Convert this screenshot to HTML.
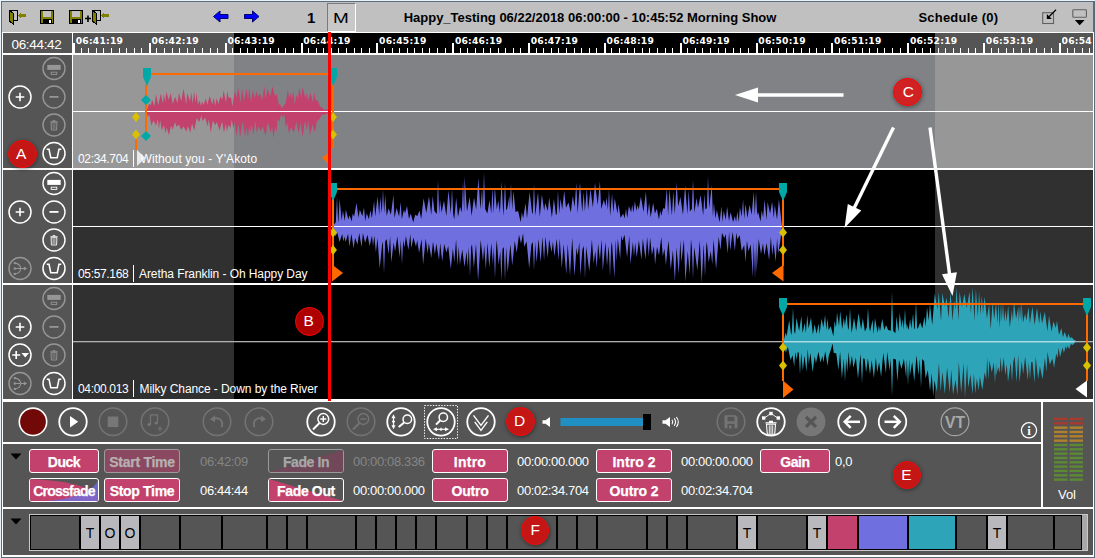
<!DOCTYPE html>
<html><head><meta charset="utf-8"><title>Segue Editor</title>
<style>
html,body{margin:0;padding:0}
body{width:1095px;height:558px;overflow:hidden;background:#e9f1f9;font-family:"Liberation Sans",sans-serif;color:#fff}
#win{position:absolute;left:0;top:0;width:1095px;height:558px;overflow:hidden}
#win div,#win svg,#win span{position:absolute}
.t{white-space:nowrap;line-height:1}
.btn{box-sizing:border-box;border:1px solid #fff;border-radius:3px;background:#c2416d;color:#fff;font-weight:bold;font-size:14px;text-align:center;overflow:hidden}
.btn span{left:0;right:0;top:4px;text-align:center;line-height:16px;letter-spacing:-0.4px;-webkit-text-stroke:0.25px currentColor}
.tv{font-size:13px;line-height:16px;letter-spacing:-0.35px;white-space:nowrap}
.rl{font-family:"DejaVu Sans","Liberation Sans",sans-serif;font-size:9.2px;font-weight:bold;line-height:12px;white-space:nowrap;color:#fff;letter-spacing:0.22px}
.lbl{font-size:12px;line-height:16px;white-space:nowrap;letter-spacing:-0.06px}
.dur{letter-spacing:-0.34px}
.ann{box-sizing:border-box;border-radius:50%;background:rgba(236,0,0,.74);border:1.8px solid #f40606;box-shadow:0.5px 1px 4px rgba(0,0,0,.45);color:#fff;font-size:15.5px;text-align:center}
.ann span{width:25.6px;top:5px;line-height:16px;text-align:center}
</style></head><body><div id="win">
<div style="left:1px;top:1px;width:1094px;height:557px;background:#5c6b7c;"></div>
<div style="left:2px;top:2px;width:1092px;height:555px;background:#ffffff;"></div>
<div style="left:2px;top:2px;width:1091px;height:30px;background:#c0c0c0;"></div>
<div style="left:1093px;top:2px;width:1px;height:30px;background:#5c6b7c;"></div>
<svg style="left:0;top:0" width="1095" height="33" viewBox="0 0 1095 33">
<g id="door" shape-rendering="crispEdges">
<rect x="9.5" y="10.5" width="8" height="10" fill="#c0c0c0" stroke="#000" stroke-width="1"/>
<polygon points="9,10 13.5,13.5 13.5,24.5 9,20.5" fill="#808000" stroke="#000" stroke-width="1"/>
<polygon points="17.5,15.5 21,12 21,14 26,14 26,17 21,17 21,19" fill="#808000"/>
</g>
<g shape-rendering="crispEdges">
<rect x="40.5" y="10.5" width="13" height="13" fill="#808000" stroke="#000"/>
<rect x="43" y="11" width="8" height="6" fill="#c0c0c0"/>
<rect x="43" y="19" width="9" height="4" fill="#000"/>
<rect x="49" y="20" width="2" height="3" fill="#fff"/>
</g>
<g shape-rendering="crispEdges" transform="translate(29 0)">
<rect x="40.5" y="10.5" width="13" height="13" fill="#808000" stroke="#000"/>
<rect x="43" y="11" width="8" height="6" fill="#c0c0c0"/>
<rect x="43" y="19" width="9" height="4" fill="#000"/>
<rect x="49" y="20" width="2" height="3" fill="#fff"/>
</g>
<path d="M85 18.5h6M88 15.5v6.5" stroke="#000" stroke-width="1.6" fill="none"/>
<g transform="translate(83 0)" shape-rendering="crispEdges">
<rect x="9.5" y="10.5" width="8" height="10" fill="#c0c0c0" stroke="#000" stroke-width="1"/>
<polygon points="9,10 13.5,13.5 13.5,24.5 9,20.5" fill="#808000" stroke="#000" stroke-width="1"/>
<polygon points="17.5,15.5 21,12 21,14 26,14 26,17 21,17 21,19" fill="#808000"/>
</g>
<polygon points="213.5,16.5 220,11 220,14.5 228,14.5 228,18.5 220,18.5 220,22" fill="#0000ff" stroke="#000070" stroke-width="1"/>
<polygon points="259,16.5 252.5,11 252.5,14.5 244.5,14.5 244.5,18.5 252.5,18.5 252.5,22" fill="#0000ff" stroke="#000070" stroke-width="1"/>
<g fill="none">
<rect x="1042.700" y="12.700" width="10.800" height="10.800" stroke="#606060" stroke-width="1.100"/>
<path d="M1056 9.800L1049 16.800" stroke="#000" stroke-width="1.300"/>
<polygon points="1046.800,19 1046.800,14 1051.800,19" fill="#000"/>
<rect x="1072.800" y="9.700" width="13.600" height="7.600" rx="0.800" stroke="#606060" stroke-width="1.100"/>
<polygon points="1074.800,20 1084.600,20 1079.700,25.200" fill="#000"/>
</g>
</svg>
<div class="t" style="left:307px;top:10px;font-size:15px;font-weight:bold;color:#000">1</div>
<div style="left:327px;top:3px;width:29px;height:29px;background:#c8c8c8;box-sizing:border-box;border:1px solid;border-color:#7a7a7a #fff #fff #7a7a7a"></div>
<div class="t" style="left:333.200px;top:9.500px;font-size:15.500px;color:#000;transform-origin:0 0;transform:scaleX(1.22)">M</div>
<div class="t" id="title" style="left:403.700px;top:10.500px;font-size:13px;font-weight:bold;color:#000;letter-spacing:-0.01px">Happy_Testing 06/22/2018 06:00:00 - 10:45:52 Morning Show</div>
<div class="t" id="sched" style="left:918.500px;top:10.500px;font-size:13px;font-weight:bold;color:#000;letter-spacing:0.2px">Schedule (0)</div>
<div style="left:3px;top:33px;width:69px;height:20px;background:#555555;"></div>
<div class="t" style="left:11.500px;top:38px;font-size:13.500px;color:#fff;letter-spacing:-0.33px">06:44:42</div>
<div style="left:73px;top:33px;width:1020px;height:20px;background:#555555;"></div>
<div style="left:234px;top:33px;width:701px;height:20px;background:#000;"></div>
<svg style="left:0;top:33px" width="1095" height="22" viewBox="0 33 1095 22" shape-rendering="crispEdges"><rect x="73" y="43" width="2" height="10" fill="#fff"/><rect x="81" y="48" width="1" height="5" fill="#fff"/><rect x="88" y="48" width="1" height="5" fill="#fff"/><rect x="96" y="48" width="1" height="5" fill="#fff"/><rect x="103" y="48" width="1" height="5" fill="#fff"/><rect x="111" y="48" width="1" height="5" fill="#fff"/><rect x="119" y="48" width="1" height="5" fill="#fff"/><rect x="126" y="48" width="1" height="5" fill="#fff"/><rect x="134" y="48" width="1" height="5" fill="#fff"/><rect x="141" y="48" width="1" height="5" fill="#fff"/><rect x="149" y="43" width="2" height="10" fill="#fff"/><rect x="156" y="48" width="1" height="5" fill="#fff"/><rect x="164" y="48" width="1" height="5" fill="#fff"/><rect x="172" y="48" width="1" height="5" fill="#fff"/><rect x="179" y="48" width="1" height="5" fill="#fff"/><rect x="187" y="48" width="1" height="5" fill="#fff"/><rect x="194" y="48" width="1" height="5" fill="#fff"/><rect x="202" y="48" width="1" height="5" fill="#fff"/><rect x="210" y="48" width="1" height="5" fill="#fff"/><rect x="217" y="48" width="1" height="5" fill="#fff"/><rect x="225" y="43" width="2" height="10" fill="#fff"/><rect x="232" y="48" width="1" height="5" fill="#fff"/><rect x="240" y="48" width="1" height="5" fill="#fff"/><rect x="247" y="48" width="1" height="5" fill="#fff"/><rect x="255" y="48" width="1" height="5" fill="#fff"/><rect x="263" y="48" width="1" height="5" fill="#fff"/><rect x="270" y="48" width="1" height="5" fill="#fff"/><rect x="278" y="48" width="1" height="5" fill="#fff"/><rect x="285" y="48" width="1" height="5" fill="#fff"/><rect x="293" y="48" width="1" height="5" fill="#fff"/><rect x="301" y="43" width="2" height="10" fill="#fff"/><rect x="308" y="48" width="1" height="5" fill="#fff"/><rect x="316" y="48" width="1" height="5" fill="#fff"/><rect x="323" y="48" width="1" height="5" fill="#fff"/><rect x="331" y="48" width="1" height="5" fill="#fff"/><rect x="338" y="48" width="1" height="5" fill="#fff"/><rect x="346" y="48" width="1" height="5" fill="#fff"/><rect x="354" y="48" width="1" height="5" fill="#fff"/><rect x="361" y="48" width="1" height="5" fill="#fff"/><rect x="369" y="48" width="1" height="5" fill="#fff"/><rect x="376" y="43" width="2" height="10" fill="#fff"/><rect x="384" y="48" width="1" height="5" fill="#fff"/><rect x="392" y="48" width="1" height="5" fill="#fff"/><rect x="399" y="48" width="1" height="5" fill="#fff"/><rect x="407" y="48" width="1" height="5" fill="#fff"/><rect x="414" y="48" width="1" height="5" fill="#fff"/><rect x="422" y="48" width="1" height="5" fill="#fff"/><rect x="429" y="48" width="1" height="5" fill="#fff"/><rect x="437" y="48" width="1" height="5" fill="#fff"/><rect x="445" y="48" width="1" height="5" fill="#fff"/><rect x="452" y="43" width="2" height="10" fill="#fff"/><rect x="460" y="48" width="1" height="5" fill="#fff"/><rect x="467" y="48" width="1" height="5" fill="#fff"/><rect x="475" y="48" width="1" height="5" fill="#fff"/><rect x="483" y="48" width="1" height="5" fill="#fff"/><rect x="490" y="48" width="1" height="5" fill="#fff"/><rect x="498" y="48" width="1" height="5" fill="#fff"/><rect x="505" y="48" width="1" height="5" fill="#fff"/><rect x="513" y="48" width="1" height="5" fill="#fff"/><rect x="520" y="48" width="1" height="5" fill="#fff"/><rect x="528" y="43" width="2" height="10" fill="#fff"/><rect x="536" y="48" width="1" height="5" fill="#fff"/><rect x="543" y="48" width="1" height="5" fill="#fff"/><rect x="551" y="48" width="1" height="5" fill="#fff"/><rect x="558" y="48" width="1" height="5" fill="#fff"/><rect x="566" y="48" width="1" height="5" fill="#fff"/><rect x="574" y="48" width="1" height="5" fill="#fff"/><rect x="581" y="48" width="1" height="5" fill="#fff"/><rect x="589" y="48" width="1" height="5" fill="#fff"/><rect x="596" y="48" width="1" height="5" fill="#fff"/><rect x="604" y="43" width="2" height="10" fill="#fff"/><rect x="611" y="48" width="1" height="5" fill="#fff"/><rect x="619" y="48" width="1" height="5" fill="#fff"/><rect x="627" y="48" width="1" height="5" fill="#fff"/><rect x="634" y="48" width="1" height="5" fill="#fff"/><rect x="642" y="48" width="1" height="5" fill="#fff"/><rect x="649" y="48" width="1" height="5" fill="#fff"/><rect x="657" y="48" width="1" height="5" fill="#fff"/><rect x="665" y="48" width="1" height="5" fill="#fff"/><rect x="672" y="48" width="1" height="5" fill="#fff"/><rect x="680" y="43" width="2" height="10" fill="#fff"/><rect x="687" y="48" width="1" height="5" fill="#fff"/><rect x="695" y="48" width="1" height="5" fill="#fff"/><rect x="702" y="48" width="1" height="5" fill="#fff"/><rect x="710" y="48" width="1" height="5" fill="#fff"/><rect x="718" y="48" width="1" height="5" fill="#fff"/><rect x="725" y="48" width="1" height="5" fill="#fff"/><rect x="733" y="48" width="1" height="5" fill="#fff"/><rect x="740" y="48" width="1" height="5" fill="#fff"/><rect x="748" y="48" width="1" height="5" fill="#fff"/><rect x="756" y="43" width="2" height="10" fill="#fff"/><rect x="763" y="48" width="1" height="5" fill="#fff"/><rect x="771" y="48" width="1" height="5" fill="#fff"/><rect x="778" y="48" width="1" height="5" fill="#fff"/><rect x="786" y="48" width="1" height="5" fill="#fff"/><rect x="793" y="48" width="1" height="5" fill="#fff"/><rect x="801" y="48" width="1" height="5" fill="#fff"/><rect x="809" y="48" width="1" height="5" fill="#fff"/><rect x="816" y="48" width="1" height="5" fill="#fff"/><rect x="824" y="48" width="1" height="5" fill="#fff"/><rect x="831" y="43" width="2" height="10" fill="#fff"/><rect x="839" y="48" width="1" height="5" fill="#fff"/><rect x="847" y="48" width="1" height="5" fill="#fff"/><rect x="854" y="48" width="1" height="5" fill="#fff"/><rect x="862" y="48" width="1" height="5" fill="#fff"/><rect x="869" y="48" width="1" height="5" fill="#fff"/><rect x="877" y="48" width="1" height="5" fill="#fff"/><rect x="884" y="48" width="1" height="5" fill="#fff"/><rect x="892" y="48" width="1" height="5" fill="#fff"/><rect x="900" y="48" width="1" height="5" fill="#fff"/><rect x="907" y="43" width="2" height="10" fill="#fff"/><rect x="915" y="48" width="1" height="5" fill="#fff"/><rect x="922" y="48" width="1" height="5" fill="#fff"/><rect x="930" y="48" width="1" height="5" fill="#fff"/><rect x="938" y="48" width="1" height="5" fill="#fff"/><rect x="945" y="48" width="1" height="5" fill="#fff"/><rect x="953" y="48" width="1" height="5" fill="#fff"/><rect x="960" y="48" width="1" height="5" fill="#fff"/><rect x="968" y="48" width="1" height="5" fill="#fff"/><rect x="975" y="48" width="1" height="5" fill="#fff"/><rect x="983" y="43" width="2" height="10" fill="#fff"/><rect x="991" y="48" width="1" height="5" fill="#fff"/><rect x="998" y="48" width="1" height="5" fill="#fff"/><rect x="1006" y="48" width="1" height="5" fill="#fff"/><rect x="1013" y="48" width="1" height="5" fill="#fff"/><rect x="1021" y="48" width="1" height="5" fill="#fff"/><rect x="1029" y="48" width="1" height="5" fill="#fff"/><rect x="1036" y="48" width="1" height="5" fill="#fff"/><rect x="1044" y="48" width="1" height="5" fill="#fff"/><rect x="1051" y="48" width="1" height="5" fill="#fff"/><rect x="1059" y="43" width="2" height="10" fill="#fff"/><rect x="1067" y="48" width="1" height="5" fill="#fff"/><rect x="1074" y="48" width="1" height="5" fill="#fff"/><rect x="1082" y="48" width="1" height="5" fill="#fff"/><rect x="1089" y="48" width="1" height="5" fill="#fff"/></svg>
<div class="rl" style="left:75.7px;top:34.7px">06:41:19</div>
<div class="rl" style="left:151.5px;top:34.7px">06:42:19</div>
<div class="rl" style="left:227.4px;top:34.7px">06:43:19</div>
<div class="rl" style="left:303.2px;top:34.7px">06:44:19</div>
<div class="rl" style="left:379.1px;top:34.7px">06:45:19</div>
<div class="rl" style="left:454.9px;top:34.7px">06:46:19</div>
<div class="rl" style="left:530.7px;top:34.7px">06:47:19</div>
<div class="rl" style="left:606.6px;top:34.7px">06:48:19</div>
<div class="rl" style="left:682.4px;top:34.7px">06:49:19</div>
<div class="rl" style="left:758.3px;top:34.7px">06:50:19</div>
<div class="rl" style="left:834.1px;top:34.7px">06:51:19</div>
<div class="rl" style="left:909.9px;top:34.7px">06:52:19</div>
<div class="rl" style="left:985.8px;top:34.7px">06:53:19</div>
<div style="left:1061.6px;top:35px;width:30.4px;height:13px;overflow:hidden"><div class="rl" style="left:0;top:-0.3px">06:54:19</div></div>
<div style="left:3px;top:55px;width:69px;height:113px;background:#555555;"></div>
<div style="left:3px;top:170px;width:69px;height:113px;background:#555555;"></div>
<div style="left:3px;top:285px;width:69px;height:114px;background:#555555;"></div>
<div style="left:73px;top:55px;width:1020px;height:113px;background:#979797;"></div>
<div style="left:234px;top:55px;width:701px;height:113px;background:#808285;"></div>
<div style="left:73px;top:170px;width:1020px;height:113px;background:#303030;"></div>
<div style="left:234px;top:170px;width:701px;height:113px;background:#000;"></div>
<div style="left:73px;top:285px;width:1020px;height:114px;background:#303030;"></div>
<div style="left:234px;top:285px;width:701px;height:114px;background:#000;"></div>
<svg style="left:0;top:54px" width="1095" height="348" viewBox="0 54 1095 348"><path d="M147.0 111.5L147.0 110.1L149.0 104.1L150.8 105.1L152.1 99.7L154.5 106.1L156.0 94.0L158.2 105.3L160.8 93.5L162.9 103.4L163.9 94.0L165.2 102.2L166.3 91.7L168.7 99.7L170.8 93.2L172.6 103.7L175.3 96.8L177.5 103.5L178.9 92.8L181.2 101.6L183.6 88.7L186.1 104.6L187.4 93.3L190.1 101.6L191.2 92.0L192.7 103.7L194.2 91.3L195.4 102.7L196.6 92.9L197.9 104.5L199.7 100.5L200.9 106.0L202.1 101.5L203.5 104.9L205.9 98.4L207.3 104.8L209.7 96.0L212.4 104.4L213.8 97.5L215.3 106.0L216.5 98.2L218.5 103.9L220.3 96.6L222.3 99.8L223.6 90.6L226.0 102.7L227.3 91.0L228.6 97.5L231.1 97.8L232.3 106.5L234.9 90.8L236.4 97.5L238.4 88.6L240.6 102.8L242.0 88.8L244.0 100.8L246.6 88.5L248.1 99.6L249.2 87.8L251.1 102.7L252.8 89.9L254.9 98.6L256.9 90.6L257.9 96.9L260.1 93.5L262.2 100.2L264.4 86.0L265.5 98.9L267.8 88.8L270.0 96.4L272.5 86.4L275.1 96.4L276.8 94.0L278.8 104.4L280.4 104.5L281.5 108.4L284.2 104.9L285.9 102.5L287.9 88.9L289.0 98.7L290.1 92.5L291.5 98.7L293.3 91.3L294.7 104.5L296.3 94.9L297.5 98.5L299.7 88.1L301.2 98.4L302.6 86.8L305.1 97.4L306.8 93.6L308.0 100.9L310.4 92.5L313.0 102.2L314.3 92.5L315.7 100.3L317.8 100.6L320.2 106.7L321.9 107.2L324.4 110.2L326.6 109.0L329.0 110.7L330.0 111.2L330.0 111.5L330.0 111.8L329.1 113.6L326.9 113.5L324.4 114.8L322.1 114.6L319.5 118.8L316.8 121.4L314.8 132.2L312.4 124.4L310.0 135.1L308.1 120.1L306.8 130.5L305.0 120.6L302.6 137.0L300.6 122.9L298.7 133.6L296.4 121.8L293.8 132.6L291.2 127.3L288.8 133.2L287.5 123.3L285.6 126.9L284.5 114.5L283.1 117.2L280.8 114.8L279.7 121.8L277.5 118.6L276.5 133.1L275.2 126.3L273.5 138.1L272.1 126.5L270.7 132.7L268.0 122.3L265.4 136.0L262.9 126.3L260.6 131.1L258.6 126.3L256.7 132.4L255.3 120.6L253.4 135.3L251.7 124.2L250.4 132.3L249.1 126.4L248.0 137.6L246.4 126.4L245.0 136.7L242.7 121.3L240.1 137.6L238.6 124.1L236.1 135.9L234.9 121.7L233.4 128.0L231.7 119.5L230.6 127.7L228.6 125.1L226.9 131.4L225.9 123.5L224.0 132.5L222.1 121.4L219.4 130.4L216.9 122.0L215.2 125.3L212.8 120.8L210.7 132.5L208.8 118.9L207.7 126.5L205.1 117.5L202.6 121.1L201.4 115.4L199.0 122.2L196.7 117.8L194.3 130.2L192.0 123.4L190.3 132.4L187.8 125.9L186.3 131.7L183.6 126.4L181.1 129.8L179.0 124.4L176.7 126.7L175.0 122.3L172.6 129.4L171.0 125.4L168.9 135.3L166.7 127.5L165.5 133.4L163.9 125.1L161.8 130.4L160.2 120.3L158.9 129.3L157.9 118.9L156.1 125.8L153.5 120.6L151.4 125.4L149.3 114.8L148.0 116.7L147.0 112.9Z" fill="#c2416d"/><path d="M334.0 226.5L334.0 224.4L335.8 222.3L337.0 196.5L338.2 222.3L338.5 221.2L339.6 198.7L341.7 220.6L342.9 210.5L344.8 221.1L345.8 209.6L348.4 219.4L349.6 215.2L351.7 221.4L352.7 213.6L354.1 216.5L356.5 203.0L358.5 217.7L359.8 209.8L362.4 216.3L364.0 207.2L365.2 220.9L366.7 213.3L368.9 219.2L370.4 210.2L371.9 218.3L374.1 200.9L375.2 216.5L377.6 196.3L379.2 215.3L380.2 197.1L381.8 213.2L383.0 189.5L384.2 213.2L385.2 195.0L386.7 215.9L388.6 208.3L390.9 214.8L393.4 195.1L394.5 217.9L396.6 208.0L399.1 216.5L400.7 201.9L401.8 219.2L404.0 209.4L405.0 213.6L407.0 206.1L409.0 219.0L410.7 213.5L413.3 222.4L415.1 214.8L417.4 216.0L419.5 210.4L421.2 219.0L423.6 198.3L426.3 212.9L429.0 196.2L431.2 215.1L432.7 195.9L434.4 210.9L436.8 213.9L438.0 179.5L439.2 213.9L440.0 199.4L441.6 212.6L444.0 200.4L446.3 216.0L448.5 190.4L450.8 213.9L452.0 188.5L453.2 213.9L454.2 219.8L456.2 197.8L458.0 217.0L460.1 206.5L461.8 212.5L463.0 181.5L464.2 212.5L464.6 176.6L467.0 211.4L469.7 196.9L471.6 215.9L474.0 197.6L476.2 209.8L478.4 177.9L480.4 209.4L482.1 188.4L482.8 209.0L484.0 172.5L485.2 209.0L487.4 213.5L489.5 199.9L491.3 213.5L492.4 187.2L493.7 213.8L494.8 187.0L496.8 209.4L498.3 200.5L499.9 212.9L501.6 181.4L503.3 215.7L503.8 209.3L505.0 182.5L506.2 209.3L506.9 209.9L509.5 195.7L509.8 209.7L511.0 183.5L512.2 209.7L513.5 191.1L515.5 211.9L518.1 211.1L520.7 222.2L521.8 212.0L523.1 218.6L525.6 202.9L527.0 218.6L529.6 192.1L532.2 213.8L532.8 213.3L534.0 183.5L535.2 213.3L535.3 215.8L538.0 192.3L539.8 217.0L541.9 194.6L544.2 210.7L545.2 203.1L547.8 211.1L549.2 197.5L551.9 217.6L553.9 198.7L556.0 215.4L556.8 213.6L558.0 190.5L559.2 213.6L560.6 198.8L562.2 209.8L564.2 190.7L566.0 207.8L568.5 202.6L570.8 212.5L572.8 195.8L574.6 207.3L576.3 182.7L577.6 213.6L580.0 182.7L582.2 212.0L583.7 192.0L584.9 211.3L586.9 188.1L588.1 210.0L590.5 189.0L592.9 207.5L595.0 183.0L597.7 204.9L599.9 181.3L601.2 208.9L603.9 199.7L605.4 206.4L606.6 197.4L607.9 209.9L609.0 188.7L610.1 216.1L612.1 193.8L613.3 212.5L614.8 198.2L617.4 213.5L618.5 204.1L620.6 218.1L623.1 213.4L624.6 218.6L626.0 208.4L627.2 218.2L628.9 205.9L631.1 212.2L632.2 204.8L633.4 212.8L634.9 201.3L636.4 210.9L637.5 205.1L638.7 209.5L640.9 196.4L643.5 212.1L645.9 191.4L647.5 216.0L649.1 202.5L650.7 217.2L653.2 202.7L654.9 213.8L656.8 208.8L659.0 219.7L660.2 210.6L661.3 215.8L663.1 208.3L664.9 208.7L666.9 188.0L668.1 215.5L669.4 188.9L671.9 215.4L673.3 191.3L674.8 214.3L676.6 182.6L678.2 206.6L680.4 197.0L683.0 215.1L685.1 185.3L687.4 214.3L688.7 189.8L689.9 211.5L691.8 208.9L693.0 179.5L694.2 208.9L694.3 212.7L696.6 197.9L698.0 208.1L700.6 195.3L703.2 215.6L704.3 194.0L705.4 209.3L706.8 208.3L708.0 176.5L709.2 208.3L711.8 185.0L712.9 216.8L713.9 202.6L715.4 218.5L716.9 210.1L719.6 222.3L721.4 206.6L722.6 222.0L723.7 210.8L725.8 220.1L727.1 206.5L729.0 221.1L730.6 212.3L733.1 222.0L734.9 216.1L736.1 222.0L737.3 211.6L738.8 222.0L739.9 207.3L741.7 216.7L743.1 199.3L744.2 218.9L745.6 203.9L747.4 218.1L749.6 204.7L751.7 214.8L753.7 191.6L754.8 215.3L756.0 191.5L757.2 215.3L758.1 211.7L760.5 221.4L761.7 210.2L763.1 217.5L764.6 199.8L766.6 220.0L767.6 201.9L770.1 213.8L772.1 201.4L773.8 218.0L774.8 205.1L777.0 219.6L778.9 199.3L780.7 214.7L782.0 226.2L782.0 226.5L782.0 226.8L780.4 240.4L778.1 253.6L777.1 238.2L775.7 261.7L773.6 243.6L772.2 255.5L770.9 236.7L769.1 260.2L766.6 243.0L764.3 255.5L763.0 243.3L761.0 254.0L758.7 238.9L756.6 271.9L756.2 242.1L755.0 278.5L753.8 242.1L752.9 276.9L750.7 244.3L748.6 251.3L746.9 240.4L745.6 261.9L744.2 244.9L741.7 250.9L739.7 235.2L737.4 239.2L736.3 232.7L734.9 250.9L732.7 231.7L730.2 250.5L729.1 231.6L727.8 253.4L725.6 233.9L724.3 238.3L722.0 232.8L720.5 249.9L718.7 236.7L716.1 269.3L713.5 239.6L712.3 264.2L710.7 251.0L708.7 262.2L706.8 241.6L706.2 247.1L705.0 276.5L703.8 247.1L703.6 244.6L701.7 283.0L699.8 240.4L697.4 270.3L694.8 251.2L694.2 247.1L693.0 278.5L691.8 247.1L691.0 239.2L689.6 274.5L687.8 250.7L685.4 281.7L683.9 239.7L681.4 262.3L680.3 240.1L678.8 274.0L676.5 247.3L674.9 281.6L672.9 250.0L670.8 269.6L668.5 240.4L665.9 264.9L664.4 248.5L662.8 256.3L661.3 237.0L659.0 255.6L657.0 246.4L655.1 264.5L653.9 246.1L651.9 254.9L650.1 237.6L648.8 256.5L647.1 236.8L645.5 259.4L642.8 238.4L641.5 259.8L638.9 240.5L636.7 257.6L635.2 242.4L634.0 256.7L632.9 241.8L630.4 264.2L629.3 235.8L627.1 257.3L624.5 234.8L622.4 240.8L621.2 235.5L620.2 258.9L617.8 238.6L616.8 261.7L615.7 239.8L614.4 277.9L611.9 241.6L611.2 246.3L610.0 276.5L608.8 246.3L608.4 249.1L607.0 265.7L605.5 242.0L602.8 270.7L601.7 239.6L599.9 260.0L598.1 243.4L596.8 268.1L595.3 250.7L593.7 263.8L591.9 239.5L589.3 271.2L586.6 250.3L586.2 246.1L585.0 278.5L583.8 246.1L582.4 249.6L580.3 275.3L579.3 242.3L577.6 255.7L576.5 247.6L574.5 276.0L572.2 237.8L570.0 275.5L567.7 244.0L566.3 274.2L563.6 244.1L561.8 268.3L559.7 238.5L558.6 260.4L556.7 238.7L554.4 256.3L552.9 241.6L551.6 252.3L549.1 239.2L547.8 257.8L545.4 236.6L544.1 260.4L542.4 237.0L540.7 262.0L538.5 238.9L536.7 262.6L535.4 245.8L535.2 242.0L534.0 270.5L532.8 242.0L531.4 244.4L529.2 268.4L526.6 241.5L524.1 246.7L523.1 233.2L521.0 243.7L519.0 234.7L516.7 252.7L514.8 241.1L512.2 265.4L510.4 244.2L507.7 272.4L506.2 247.1L505.0 280.5L503.8 247.1L502.5 249.0L501.4 281.1L500.3 251.2L498.6 264.4L496.8 240.1L496.2 247.1L495.0 278.5L493.8 247.1L492.9 264.1L491.3 242.8L489.3 267.7L487.5 242.7L485.8 269.4L484.2 245.2L483.0 261.2L480.7 239.8L478.1 281.1L476.0 243.8L473.9 267.8L472.0 244.2L471.2 247.1L470.0 276.5L468.8 247.1L467.7 267.1L466.6 251.6L464.5 267.0L462.3 249.5L459.9 264.6L458.7 246.6L457.5 265.8L456.1 239.3L454.3 262.2L452.9 248.2L450.8 269.1L448.2 246.0L446.4 252.4L444.2 243.9L442.2 261.6L440.2 243.0L439.0 259.9L436.3 243.5L434.9 254.4L433.0 241.5L431.3 257.9L428.8 243.0L427.7 253.7L425.7 238.6L423.1 264.5L421.6 239.1L419.1 253.0L417.2 239.9L416.0 246.8L413.4 237.5L411.3 248.0L410.3 233.9L408.4 249.9L405.9 235.9L404.5 247.4L403.2 239.9L402.0 264.5L400.8 239.9L399.6 257.4L397.3 236.3L395.1 251.4L393.6 242.5L391.3 262.5L390.1 236.3L388.6 254.3L386.6 239.1L385.2 241.6L384.0 273.5L382.8 241.6L382.1 244.5L379.7 268.5L377.5 238.0L375.9 252.3L374.3 235.8L373.0 246.2L372.0 235.5L369.6 246.0L367.5 234.8L365.1 242.8L362.9 233.0L361.6 247.0L359.2 233.1L357.5 244.4L355.1 237.8L353.6 248.2L351.4 233.8L349.4 246.7L348.1 233.8L345.6 242.1L344.5 236.5L343.4 241.5L342.2 234.1L339.6 242.1L337.3 232.6L335.5 236.4L334.0 228.4Z" fill="#6f6fe0"/><path d="M784.0 341.5L784.0 339.6L785.6 332.5L786.6 336.2L789.2 320.0L791.2 335.4L791.8 331.4L793.0 307.5L794.2 331.4L795.1 334.1L796.5 317.8L799.1 331.1L801.4 316.0L802.6 333.0L804.7 323.0L805.9 333.1L807.2 315.1L808.6 328.6L811.0 317.5L812.9 334.6L814.6 324.2L816.6 333.8L818.6 323.4L819.6 334.0L821.5 318.6L823.4 327.6L825.1 314.7L826.3 330.1L827.5 318.3L828.6 330.2L830.7 326.2L833.4 336.2L834.6 320.9L836.0 327.6L837.0 312.5L839.0 326.1L840.2 311.0L842.2 329.0L843.9 317.7L844.9 325.9L846.5 314.3L848.2 330.2L848.8 327.5L850.0 308.5L851.2 327.5L851.7 332.9L854.0 317.7L856.2 330.9L858.5 313.1L861.1 329.5L862.8 318.2L864.9 331.6L866.8 327.5L868.0 307.5L869.2 327.5L870.0 331.5L872.6 319.7L873.6 334.2L875.0 318.1L877.6 332.8L878.9 325.3L880.0 331.4L882.2 318.7L884.4 330.0L886.0 325.1L888.2 330.0L890.8 330.7L892.0 291.5L893.2 330.7L895.4 333.2L896.5 316.3L898.4 331.8L899.7 312.7L901.6 327.4L902.7 318.7L903.8 329.6L905.0 308.5L906.2 329.6L906.5 323.3L908.6 330.0L910.1 319.0L911.3 328.5L913.1 313.4L914.2 329.1L914.8 328.8L916.0 301.5L917.2 328.8L918.2 327.8L920.2 322.3L922.3 328.5L924.4 316.7L925.7 326.7L927.0 307.2L928.8 320.8L929.9 303.6L932.2 325.1L934.8 293.4L937.5 309.7L938.7 292.1L941.0 321.2L942.4 293.0L945.0 307.1L946.6 297.2L948.5 318.0L950.6 291.9L952.5 321.1L954.2 300.6L955.4 310.3L956.5 287.0L958.5 320.7L959.6 291.5L962.0 307.1L964.3 293.8L966.8 308.1L969.5 291.4L970.9 313.8L972.7 287.1L974.4 320.9L975.9 289.0L977.8 316.8L979.1 291.3L980.4 314.9L981.8 295.8L983.0 313.4L984.6 296.5L986.9 318.6L989.1 303.9L990.7 329.5L992.6 301.8L994.2 319.4L996.0 302.8L997.5 323.2L998.6 301.4L999.7 328.0L1001.0 302.1L1001.8 322.1L1003.0 303.5L1004.2 322.1L1005.4 310.1L1006.6 321.3L1008.2 305.5L1009.8 327.7L1011.9 309.8L1012.9 321.5L1013.9 301.8L1016.1 318.8L1018.4 306.8L1018.8 322.3L1020.0 304.5L1021.2 322.3L1021.5 302.6L1023.1 322.6L1025.1 313.4L1026.4 320.5L1028.5 306.9L1029.9 323.4L1032.4 306.5L1034.6 325.0L1037.0 307.7L1039.2 324.1L1040.3 311.5L1042.1 323.4L1044.8 311.7L1047.4 331.2L1049.0 315.8L1051.6 331.7L1053.5 321.3L1055.7 327.9L1057.0 320.8L1059.0 334.9L1061.4 327.9L1062.9 337.2L1064.6 331.9L1067.2 338.6L1068.5 333.5L1069.9 338.1L1071.7 337.2L1074.1 339.9L1075.3 340.0L1076.0 341.2L1076.0 341.5L1076.0 341.8L1075.4 342.2L1072.7 344.9L1070.8 343.9L1069.1 349.2L1067.8 345.4L1066.8 349.2L1065.6 346.2L1063.9 352.9L1062.6 347.5L1060.0 357.3L1058.6 347.4L1057.5 357.9L1056.2 353.4L1054.1 367.7L1052.4 358.5L1049.8 364.5L1047.5 352.0L1046.5 371.9L1044.9 358.1L1042.5 379.2L1039.9 366.0L1038.2 379.0L1035.7 357.1L1034.6 382.9L1032.5 361.9L1031.2 361.9L1030.0 379.5L1028.8 361.9L1027.8 380.4L1025.1 356.4L1023.2 374.3L1021.7 360.9L1019.5 382.3L1018.2 354.8L1016.6 382.1L1014.6 356.2L1013.2 362.2L1012.0 381.5L1010.8 362.2L1010.5 364.1L1008.0 382.0L1006.8 363.9L1005.3 375.2L1003.7 357.6L1001.7 373.0L1000.7 356.9L999.5 373.1L998.2 367.1L996.4 375.2L996.2 362.4L995.0 383.5L993.8 362.4L991.8 372.3L989.4 360.5L988.3 380.1L987.2 357.3L986.2 379.7L984.7 372.3L982.3 389.9L979.8 376.3L978.8 390.6L976.8 378.4L975.2 393.6L973.9 373.5L972.5 394.5L970.5 374.4L968.2 387.8L967.1 364.1L965.0 397.4L963.6 362.9L961.2 393.0L958.8 361.7L957.5 395.5L955.5 379.4L953.0 394.7L951.3 369.8L949.7 392.5L947.1 367.7L944.8 394.0L942.4 371.5L940.7 391.5L938.9 363.1L936.9 392.1L934.6 380.4L933.2 396.2L931.7 373.3L930.0 391.1L927.8 370.1L925.6 378.4L924.1 361.2L922.2 359.0L921.0 387.5L919.8 359.0L918.4 375.2L916.6 355.2L914.2 381.6L912.2 361.8L909.8 376.3L909.2 358.9L908.0 385.5L906.8 358.9L906.2 377.9L903.9 358.7L901.5 369.0L899.0 359.7L897.4 381.5L895.9 359.6L893.2 358.7L892.0 396.5L890.8 358.7L889.7 370.8L887.2 351.9L885.9 373.4L883.3 352.7L881.1 376.9L879.1 362.1L877.2 372.4L875.9 357.6L873.9 378.0L871.7 360.3L870.0 374.4L867.9 358.2L866.1 372.4L864.6 358.8L863.2 358.5L862.0 383.5L860.8 358.5L860.5 353.9L858.0 378.7L855.9 357.4L853.4 367.7L851.9 355.8L849.9 367.7L848.7 351.7L847.2 372.4L846.2 358.4L845.0 381.5L843.8 358.4L841.9 378.5L840.1 351.8L838.4 370.1L836.3 353.6L833.7 352.8L832.6 343.4L831.1 349.0L828.7 356.1L827.6 366.1L825.2 351.3L823.4 362.4L822.4 356.0L820.5 362.5L818.4 351.7L815.9 363.4L814.8 356.1L812.6 372.1L810.4 352.9L808.8 364.5L807.8 348.9L806.4 371.8L804.5 355.4L802.9 370.6L801.2 353.1L800.0 374.5L798.8 353.1L797.8 351.8L796.8 360.0L795.3 352.2L794.2 366.4L792.6 355.2L790.5 360.0L787.9 347.0L785.8 352.7L784.0 343.1Z" fill="#2ea4b8"/><rect x="73" y="111" width="1020" height="1" fill="#fff"/><rect x="73" y="226" width="1020" height="1" fill="#fff"/><rect x="73" y="341" width="1020" height="1.300" fill="#b0b0b0"/><rect x="784" y="341" width="290" height="1.300" fill="#a8e0ea"/><path d="M146 84V132" stroke="#ff6a00" stroke-width="2" fill="none"/><path d="M147 74H333" stroke="#ff6a00" stroke-width="2" fill="none"/><path d="M333 84V148" stroke="#ff6a00" stroke-width="2" fill="none"/><path d="M136 139V150" stroke="#ff6a00" stroke-width="2" fill="none"/><polygon points="143,68 151,68 151,77 147,86 143,77" fill="#00a8a8"/><polygon points="329,68 337,68 337,77 333,86 329,77" fill="#00a8a8"/><polygon points="146,95.0 151.0,100 146,105.0 141.0,100" fill="#00a8a8"/><polygon points="146,131.0 151.0,136 146,141.0 141.0,136" fill="#00a8a8"/><polygon points="136,112.0 140.0,117 136,122.0 132.0,117" fill="#d9c000"/><polygon points="136,129.5 140.0,134.5 136,139.5 132.0,134.5" fill="#d9c000"/><polygon points="333,112.0 337.0,117 333,122.0 329.0,117" fill="#d9c000"/><polygon points="333,129.5 337.0,134.5 333,139.5 329.0,134.5" fill="#d9c000"/><polygon points="137,150 145.500,158 137,166" fill="#fff" fill-opacity="0.8"/><polygon points="322,158 331,150.500 331,165.500" fill="#ff6a00"/><path d="M334 189H783" stroke="#ff6a00" stroke-width="2" fill="none"/><path d="M333 199V266" stroke="#ff6a00" stroke-width="2" fill="none"/><path d="M783 199V266" stroke="#ff6a00" stroke-width="2" fill="none"/><polygon points="329,183 337,183 337,192 333,201 329,192" fill="#00a8a8"/><polygon points="779,183 787,183 787,192 783,201 779,192" fill="#00a8a8"/><polygon points="333,227.5 337.0,232.5 333,237.5 329.0,232.5" fill="#d9c000"/><polygon points="333,245.0 337.0,250 333,255.0 329.0,250" fill="#d9c000"/><polygon points="783,227.5 787.0,232.5 783,237.5 779.0,232.5" fill="#d9c000"/><polygon points="783,245.0 787.0,250 783,255.0 779.0,250" fill="#d9c000"/><polygon points="332,264.500 343,273 332,281.500" fill="#ff6a00"/><polygon points="772,273 783.500,264.500 783.500,281.500" fill="#ff6a00"/><path d="M783 304H1087" stroke="#ff6a00" stroke-width="2" fill="none"/><path d="M783 314V381" stroke="#ff6a00" stroke-width="2" fill="none"/><path d="M1087 314V381" stroke="#ff6a00" stroke-width="2" fill="none"/><polygon points="779,298 787,298 787,307 783,316 779,307" fill="#00a8a8"/><polygon points="1083,298 1091,298 1091,307 1087,316 1083,307" fill="#00a8a8"/><polygon points="783,342.5 787.0,347.5 783,352.5 779.0,347.5" fill="#d9c000"/><polygon points="783,360.5 787.0,365.5 783,370.5 779.0,365.5" fill="#d9c000"/><polygon points="1087,342.5 1091.0,347.5 1087,352.5 1083.0,347.5" fill="#d9c000"/><polygon points="1087,360.5 1091.0,365.5 1087,370.5 1083.0,365.5" fill="#d9c000"/><polygon points="783,380.500 793.500,389.500 783,398" fill="#ff6a00"/><polygon points="1075.500,389 1087,380.500 1087,397.500" fill="#fff"/><g transform="translate(54 68.5)"><circle r="11.0" fill="none" stroke="#969696" stroke-width="1.4"/><rect x="-6.700" y="-3.600" width="13.400" height="5" fill="#969696"/><rect x="-2.800" y="3.700" width="5.600" height="2.200" fill="none" stroke="#969696" stroke-width="0.900"/></g><g transform="translate(54 97)"><circle r="11.0" fill="none" stroke="#969696" stroke-width="1.4"/><rect x="-4.500" y="-1" width="9" height="1.800" fill="#969696"/></g><g transform="translate(54 125)"><circle r="11.0" fill="none" stroke="#969696" stroke-width="1.4"/><path d="M-3.700 -3.200h7.400M-1.300 -4.300h2.600" stroke="#969696" stroke-width="1" fill="none"/><path d="M-2.900 -2.200h5.800l-0.300 7.200h-5.200z" fill="none" stroke="#969696" stroke-width="0.900"/><path d="M-0.900 -1.200v5.200M0.900 -1.200v5.200" stroke="#969696" stroke-width="0.700"/></g><g transform="translate(54 153.5)"><circle r="11.0" fill="none" stroke="#ffffff" stroke-width="1.5"/><path d="M-7.300 -4.300h2.300l1.800 8.600h6.400l1.800 -8.600h2.300" fill="none" stroke="#ffffff" stroke-width="1.600" stroke-linejoin="miter"/></g><g transform="translate(20 97)"><circle r="11.0" fill="none" stroke="#ffffff" stroke-width="1.5"/><path d="M-4.300 0h8.600M0 -4.300v8.600" stroke="#ffffff" stroke-width="1.600" fill="none"/></g><g transform="translate(54 183.5)"><circle r="11.0" fill="none" stroke="#ffffff" stroke-width="1.4"/><rect x="-6.700" y="-3.600" width="13.400" height="5" fill="#ffffff"/><rect x="-2.800" y="3.700" width="5.600" height="2.200" fill="none" stroke="#ffffff" stroke-width="0.900"/></g><g transform="translate(54 212)"><circle r="11.0" fill="none" stroke="#ffffff" stroke-width="1.4"/><rect x="-4.500" y="-1" width="9" height="1.800" fill="#ffffff"/></g><g transform="translate(54 240)"><circle r="11.0" fill="none" stroke="#ffffff" stroke-width="1.4"/><path d="M-3.700 -3.200h7.400M-1.300 -4.300h2.600" stroke="#ffffff" stroke-width="1" fill="none"/><path d="M-2.900 -2.200h5.800l-0.300 7.200h-5.200z" fill="none" stroke="#ffffff" stroke-width="0.900"/><path d="M-0.900 -1.200v5.200M0.900 -1.200v5.200" stroke="#ffffff" stroke-width="0.700"/></g><g transform="translate(54 268.5)"><circle r="11.0" fill="none" stroke="#ffffff" stroke-width="1.5"/><path d="M-7.300 -4.300h2.300l1.800 8.600h6.400l1.800 -8.600h2.300" fill="none" stroke="#ffffff" stroke-width="1.600" stroke-linejoin="miter"/></g><g transform="translate(20 212)"><circle r="11.0" fill="none" stroke="#ffffff" stroke-width="1.5"/><path d="M-4.300 0h8.600M0 -4.300v8.600" stroke="#ffffff" stroke-width="1.600" fill="none"/></g><g transform="translate(20 268.5)"><circle r="11.0" fill="none" stroke="#969696" stroke-width="1.4"/><path d="M-5 -5.400Q0 -5 0.800 0M-5 5.400Q0 5 0.800 0M-5 0h10" fill="none" stroke="#969696" stroke-width="1.100"/><polygon points="7.200,0 3.800,-2 3.800,2" fill="#969696"/><circle cx="-5.200" cy="-5.400" r="1.200" fill="#969696"/><circle cx="-5.200" cy="5.400" r="1.200" fill="#969696"/><circle cx="-5.200" cy="0" r="1.200" fill="#969696"/></g><g transform="translate(54 298.5)"><circle r="11.0" fill="none" stroke="#969696" stroke-width="1.4"/><rect x="-6.700" y="-3.600" width="13.400" height="5" fill="#969696"/><rect x="-2.800" y="3.700" width="5.600" height="2.200" fill="none" stroke="#969696" stroke-width="0.900"/></g><g transform="translate(54 327)"><circle r="11.0" fill="none" stroke="#969696" stroke-width="1.4"/><rect x="-4.500" y="-1" width="9" height="1.800" fill="#969696"/></g><g transform="translate(54 355)"><circle r="11.0" fill="none" stroke="#969696" stroke-width="1.4"/><path d="M-3.700 -3.200h7.400M-1.300 -4.300h2.600" stroke="#969696" stroke-width="1" fill="none"/><path d="M-2.900 -2.200h5.800l-0.300 7.200h-5.200z" fill="none" stroke="#969696" stroke-width="0.900"/><path d="M-0.900 -1.200v5.200M0.900 -1.200v5.200" stroke="#969696" stroke-width="0.700"/></g><g transform="translate(54 383.5)"><circle r="11.0" fill="none" stroke="#ffffff" stroke-width="1.5"/><path d="M-7.300 -4.300h2.300l1.800 8.600h6.400l1.800 -8.600h2.300" fill="none" stroke="#ffffff" stroke-width="1.600" stroke-linejoin="miter"/></g><g transform="translate(20 327)"><circle r="11.0" fill="none" stroke="#ffffff" stroke-width="1.5"/><path d="M-4.300 0h8.600M0 -4.300v8.600" stroke="#ffffff" stroke-width="1.600" fill="none"/></g><g transform="translate(20 355)"><circle r="11.0" fill="none" stroke="#ffffff" stroke-width="1.5"/><path d="M-7.800 0h8M-3.800 -4v8" stroke="#ffffff" stroke-width="1.700" fill="none"/><polygon points="1.500,-2.100 9,-2.100 5.250,2.400" fill="#ffffff"/></g><g transform="translate(20 383.5)"><circle r="11.0" fill="none" stroke="#969696" stroke-width="1.4"/><path d="M-5 -5.400Q0 -5 0.800 0M-5 5.400Q0 5 0.800 0M-5 0h10" fill="none" stroke="#969696" stroke-width="1.100"/><polygon points="7.200,0 3.800,-2 3.800,2" fill="#969696"/><circle cx="-5.200" cy="-5.400" r="1.200" fill="#969696"/><circle cx="-5.200" cy="5.400" r="1.200" fill="#969696"/><circle cx="-5.200" cy="0" r="1.200" fill="#969696"/></g></svg>
<div class="lbl dur" style="left:78px;top:151px">02:34.704</div>
<div style="left:133px;top:150px;width:1px;height:17px;background:#fff;"></div>
<div class="lbl" style="left:140.5px;top:151px;letter-spacing:0.090px">Without you - Y'Akoto</div>
<div class="lbl dur" style="left:78px;top:266px">05:57.168</div>
<div style="left:133px;top:265px;width:1px;height:17px;background:#fff;"></div>
<div class="lbl" style="left:139.0px;top:266px;letter-spacing:-0.077px">Aretha Franklin - Oh Happy Day</div>
<div class="lbl dur" style="left:78px;top:381px">04:00.013</div>
<div style="left:133px;top:380px;width:1px;height:17px;background:#fff;"></div>
<div class="lbl" style="left:139.5px;top:381px;letter-spacing:-0.078px">Milky Chance - Down by the River</div>
<div style="left:3px;top:402px;width:1038px;height:40px;background:#555555;"></div>
<div style="left:1043px;top:402px;width:50px;height:105px;background:#555555;"></div>
<svg style="left:0;top:402px" width="1095" height="110" viewBox="0 402 1095 110"><circle cx="33" cy="421.8" r="13.700" fill="#720909" stroke="#fff" stroke-width="1.6"/><g transform="translate(73 421.8)"><circle r="13.75" fill="none" stroke="#ffffff" stroke-width="1.8"/><polygon points="-3,-5.800 5.200,0 -3,5.800" fill="#fff"/></g><g transform="translate(113 421.8)"><circle r="13.75" fill="none" stroke="#747474" stroke-width="1.5"/><rect x="-5.300" y="-5.300" width="10.600" height="10.600" fill="#777"/></g><g transform="translate(155 421.8)"><circle r="13.75" fill="none" stroke="#747474" stroke-width="1.5"/><path d="M-4.500 2.500v-9.500h7v8" fill="none" stroke="#747474" stroke-width="1.300"/><ellipse cx="-5.800" cy="2.800" rx="1.900" ry="1.500" fill="#747474"/><ellipse cx="1.200" cy="1.300" rx="1.900" ry="1.500" fill="#747474"/><path d="M2.500 7h5M5 4.500v5" stroke="#747474" stroke-width="1.100"/></g><g transform="translate(217 421.8)"><circle r="13.75" fill="none" stroke="#747474" stroke-width="1.5"/><path d="M-4.500 -2.500C2 -5.500 7 -1 4.500 5.500" fill="none" stroke="#747474" stroke-width="1.800"/><polygon points="-7,-2.500 -2,-6.500 -2,0.500" fill="#747474"/></g><g transform="translate(259 421.8)"><circle r="13.75" fill="none" stroke="#747474" stroke-width="1.5"/><path d="M4.500 -2.500C-2 -5.500 -7 -1 -4.500 5.500" fill="none" stroke="#747474" stroke-width="1.800"/><polygon points="7,-2.500 2,-6.500 2,0.500" fill="#747474"/></g><g transform="translate(321 421.8)"><circle r="13.75" fill="none" stroke="#ffffff" stroke-width="1.8"/><circle cx="2.300" cy="-2.800" r="5.400" fill="none" stroke="#fff" stroke-width="1.500"/><path d="M-1.500 1.200L-8 7.700" stroke="#fff" stroke-width="1.900"/><path d="M-0.700 -2.800h6M2.300 -5.800v6" stroke="#fff" stroke-width="1.400"/></g><g transform="translate(361 421.8)"><circle r="13.75" fill="none" stroke="#747474" stroke-width="1.5"/><circle cx="2.300" cy="-2.800" r="5.400" fill="none" stroke="#747474" stroke-width="1.500"/><path d="M-1.500 1.200L-8 7.700" stroke="#747474" stroke-width="1.900"/><path d="M-0.700 -2.800h6" stroke="#747474" stroke-width="1.400"/></g><g transform="translate(401 421.8)"><circle r="13.75" fill="none" stroke="#ffffff" stroke-width="1.8"/><circle cx="6.300" cy="-2.600" r="4.300" fill="none" stroke="#fff" stroke-width="1.500"/><path d="M3.200 0.700L-2.300 5.300" stroke="#fff" stroke-width="2"/><path d="M-7.500 -5v10" stroke="#fff" stroke-width="1.200"/><polygon points="-7.500,-7.500 -5.500,-3.500 -9.500,-3.500" fill="#fff"/><polygon points="-7.500,7.500 -5.500,3.500 -9.500,3.500" fill="#fff"/><rect x="-9" y="-1" width="3" height="1.500" fill="#fff"/></g><g transform="translate(441 421.8)"><circle r="13.75" fill="none" stroke="#ffffff" stroke-width="1.8"/><circle cx="2.300" cy="-4.500" r="4.200" fill="none" stroke="#fff" stroke-width="1.500"/><path d="M-0.700 -1.500L-5 2.800" stroke="#fff" stroke-width="2"/><path d="M-5.500 7.500h11" stroke="#fff" stroke-width="1.200"/><polygon points="-8,7.500 -4,5.500 -4,9.500" fill="#fff"/><polygon points="8,7.500 4,5.500 4,9.500" fill="#fff"/><rect x="-0.700" y="6" width="1.400" height="3" fill="#fff"/></g><rect x="424.500" y="405.500" width="33" height="33" fill="none" stroke="#fff" stroke-width="1" stroke-dasharray="1.4 1.4" stroke-opacity="0.95"/><g transform="translate(481 421.8)"><circle r="13.75" fill="none" stroke="#ffffff" stroke-width="1.8"/><path d="M-7.500 -6.500L0 3.500L7.500 -6.500M-6.300 0L0 8.500L6.300 0" fill="none" stroke="#fff" stroke-width="1.400"/></g><polygon points="542.500,420.300 545.500,420.300 550,417 550,427 545.500,423.700 542.500,423.700" fill="#fff"/><rect x="560.500" y="418" width="83" height="8" fill="#1f8fc4"/><rect x="643" y="414" width="8" height="16" fill="#000"/><polygon points="662.500,420.300 665.500,420.300 670,417 670,427 665.500,423.700 662.500,423.700" fill="#fff"/><path d="M672 419.800q1.500 2.200 0 4.400M674.200 418.300q2.700 3.700 0 7.400M676.400 417q3.800 5 0 10" fill="none" stroke="#fff" stroke-width="1.100"/><g transform="translate(731 421.8)"><circle r="13.75" fill="none" stroke="#747474" stroke-width="1.5"/><path d="M-6.500 -6.500h11l2 2v11h-13z" fill="#747474"/><rect x="-3.500" y="-5" width="7" height="4.500" fill="#555555"/><rect x="-3.500" y="2" width="7" height="4.500" fill="#555555"/><rect x="-2" y="3.500" width="2.500" height="3" fill="#747474"/></g><g transform="translate(771 421.8)"><circle r="13.75" fill="none" stroke="#ffffff" stroke-width="1.8"/><path d="M-7 -3.500L0 -8.500L7 -3.500" fill="none" stroke="#fff" stroke-width="0.900"/><rect x="-1.700" y="-10" width="3.400" height="3.400" fill="#fff"/><rect x="-9" y="-5.500" width="3.400" height="3.400" fill="#fff"/><rect x="5.600" y="-5.500" width="3.400" height="3.400" fill="#fff"/><path d="M-5.500 1h11M-2 -0.300h4" stroke="#fff" stroke-width="1.300"/><path d="M-4.500 2.500h9l-0.800 10h-7.400z" fill="none" stroke="#fff" stroke-width="1.100"/><path d="M-1.700 3.500v8.500M0 3.500v8.500M1.700 3.500v8.500" stroke="#fff" stroke-width="0.900"/></g><circle cx="811" cy="421.8" r="14.400" fill="#777"/><path d="M806 416.8l10 10M816 416.8l-10 10" stroke="#555555" stroke-width="3.200"/><g transform="translate(852 421.8)"><circle r="13.75" fill="none" stroke="#ffffff" stroke-width="1.8"/><path d="M-6.500 0h14.500" stroke="#fff" stroke-width="2.500"/><path d="M-1.300 -6L-7.300 0L-1.300 6" fill="none" stroke="#fff" stroke-width="2.500"/></g><g transform="translate(892.5 421.8)"><circle r="13.75" fill="none" stroke="#ffffff" stroke-width="1.8"/><path d="M6.500 0h-14.500" stroke="#fff" stroke-width="2.500"/><path d="M1.300 -6L7.300 0L1.300 6" fill="none" stroke="#fff" stroke-width="2.500"/></g><g transform="translate(955 421.8)"><circle r="13.9" fill="none" stroke="#a4a4a4" stroke-width="1.2"/><text x="0" y="5.800" text-anchor="middle" font-family="Liberation Sans, sans-serif" font-weight="bold" font-size="16.500" fill="#a8a8a8" textLength="20" lengthAdjust="spacingAndGlyphs">VT</text></g><g transform="translate(1029 430.3)"><circle r="7.6" fill="none" stroke="#ffffff" stroke-width="1.3"/><text x="0" y="4.300" text-anchor="middle" font-family="Liberation Serif, serif" font-weight="bold" font-size="13" fill="#fff">i</text></g><rect x="1054" y="417.80" width="13.500" height="2.400" fill="#a83a30"/><rect x="1069.500" y="417.80" width="13.500" height="2.400" fill="#a83a30"/><rect x="1054" y="422.13" width="13.500" height="2.400" fill="#a83a30"/><rect x="1069.500" y="422.13" width="13.500" height="2.400" fill="#a83a30"/><rect x="1054" y="426.46" width="13.500" height="2.400" fill="#b0802c"/><rect x="1069.500" y="426.46" width="13.500" height="2.400" fill="#b0802c"/><rect x="1054" y="430.79" width="13.500" height="2.400" fill="#b0802c"/><rect x="1069.500" y="430.79" width="13.500" height="2.400" fill="#b0802c"/><rect x="1054" y="435.12" width="13.500" height="2.400" fill="#b0802c"/><rect x="1069.500" y="435.12" width="13.500" height="2.400" fill="#b0802c"/><rect x="1054" y="439.45" width="13.500" height="2.400" fill="#b0802c"/><rect x="1069.500" y="439.45" width="13.500" height="2.400" fill="#b0802c"/><rect x="1054" y="443.78" width="13.500" height="2.400" fill="#5c8a34"/><rect x="1069.500" y="443.78" width="13.500" height="2.400" fill="#5c8a34"/><rect x="1054" y="448.11" width="13.500" height="2.400" fill="#5c8a34"/><rect x="1069.500" y="448.11" width="13.500" height="2.400" fill="#5c8a34"/><rect x="1054" y="452.44" width="13.500" height="2.400" fill="#5c8a34"/><rect x="1069.500" y="452.44" width="13.500" height="2.400" fill="#5c8a34"/><rect x="1054" y="456.77" width="13.500" height="2.400" fill="#5c8a34"/><rect x="1069.500" y="456.77" width="13.500" height="2.400" fill="#5c8a34"/><rect x="1054" y="461.10" width="13.500" height="2.400" fill="#5c8a34"/><rect x="1069.500" y="461.10" width="13.500" height="2.400" fill="#5c8a34"/><rect x="1054" y="465.43" width="13.500" height="2.400" fill="#5c8a34"/><rect x="1069.500" y="465.43" width="13.500" height="2.400" fill="#5c8a34"/><rect x="1054" y="469.76" width="13.500" height="2.400" fill="#5c8a34"/><rect x="1069.500" y="469.76" width="13.500" height="2.400" fill="#5c8a34"/><rect x="1054" y="474.09" width="13.500" height="2.400" fill="#5c8a34"/><rect x="1069.500" y="474.09" width="13.500" height="2.400" fill="#5c8a34"/><rect x="1054" y="478.42" width="13.500" height="2.400" fill="#5c8a34"/><rect x="1069.500" y="478.42" width="13.500" height="2.400" fill="#5c8a34"/></svg>
<div class="lbl" style="left:1058px;top:487px;font-size:13px">Vol</div>
<div style="left:3px;top:444px;width:1038px;height:63px;background:#555555;"></div>
<svg style="left:10px;top:453px" width="12" height="8"><polygon points="0.500,0.500 11.500,0.500 6,6.500" fill="#000"/></svg>
<div class="btn" style="left:29px;top:449px;width:70px;height:24px;"><span style="letter-spacing:-0.48px">Duck</span></div>
<div class="btn" style="left:104px;top:449px;width:76px;height:24px;background:#8a4960;border-color:#a09a9c;color:#b8b0b3"><span style="letter-spacing:-0.27px">Start Time</span></div>
<div class="tv" style="left:200px;top:454px;color:#858585">06:42:09</div>
<div class="btn" style="left:29px;top:478px;width:70px;height:24px;background:#555555;border-color:#fff;color:#fff"><svg style="left:0;top:0" width="68" height="22" viewBox="0 0 68 22" preserveAspectRatio="none"><path d="M0 0Q68 3.3 68 22L0 22Z" fill="#c2416d"/><path d="M0 22.500C30.6 22.500 61.2 17 68 1L68 22.500Z" fill="#6f6fe0" fill-opacity="0.8"/></svg><span style="letter-spacing:-0.75px">Crossfade</span></div>
<div class="btn" style="left:104px;top:478px;width:76px;height:24px;"><span style="letter-spacing:-0.33px">Stop Time</span></div>
<div class="tv" style="left:200px;top:483px">06:44:44</div>
<div class="btn" style="left:268px;top:449px;width:76px;height:24px;background:#555555;border-color:#9a9a9a;color:#a8a8a8"><svg style="left:0;top:0" width="74" height="22" viewBox="0 0 74 22" preserveAspectRatio="none"><polygon points="0,22 74,0 74,22" fill="#70485a"/></svg><span style="letter-spacing:-0.42px">Fade In</span></div>
<div class="tv" style="left:353px;top:454px;color:#858585">00:00:08.336</div>
<div class="btn" style="left:268px;top:478px;width:76px;height:24px;background:#555555;border-color:#fff;color:#fff"><svg style="left:0;top:0" width="74" height="22" viewBox="0 0 74 22" preserveAspectRatio="none"><polygon points="0,0 74,22 0,22" fill="#c2416d"/></svg><span style="letter-spacing:-0.36px">Fade Out</span></div>
<div class="tv" style="left:353px;top:483px">00:00:00.000</div>
<div class="btn" style="left:432px;top:449px;width:76px;height:24px;"><span style="letter-spacing:0.25px">Intro</span></div>
<div class="tv" style="left:517px;top:454px">00:00:00.000</div>
<div class="btn" style="left:432px;top:478px;width:76px;height:24px;"><span style="letter-spacing:-0.2px">Outro</span></div>
<div class="tv" style="left:517px;top:483px">00:02:34.704</div>
<div class="btn" style="left:596px;top:449px;width:76px;height:24px;"><span style="letter-spacing:0.05px">Intro 2</span></div>
<div class="tv" style="left:681px;top:454px">00:00:00.000</div>
<div class="btn" style="left:596px;top:478px;width:76px;height:24px;"><span style="letter-spacing:-0.12px">Outro 2</span></div>
<div class="tv" style="left:681px;top:483px">00:02:34.704</div>
<div class="btn" style="left:760px;top:449px;width:70px;height:24px;"><span style="letter-spacing:-0.43px">Gain</span></div>
<div class="tv" style="left:835px;top:454px">0,0</div>
<div style="left:3px;top:509px;width:1090px;height:46px;background:#555555;"></div>
<svg style="left:10px;top:518px" width="12" height="8"><polygon points="0.500,0.500 11.500,0.500 6,6.500" fill="#000"/></svg>
<div style="left:29px;top:514px;width:1059px;height:37px;background:#c8c8c8;"></div>
<div style="left:30px;top:515px;width:1052px;height:35px;background:#000;"></div>
<div style="left:1082px;top:515px;width:5px;height:35px;background:#a8a8a8;"></div>
<div style="left:31px;top:516px;width:48px;height:33px;background:#555555;"></div>
<div style="left:81px;top:516px;width:18px;height:33px;background:#b9b9bd;"></div>
<div class="t" style="left:81.0px;top:525.800px;width:18.0px;text-align:center;font-size:14px;color:#000">T</div>
<div style="left:101px;top:516px;width:18px;height:33px;background:#b9b9bd;"></div>
<div class="t" style="left:101.0px;top:525.800px;width:18.0px;text-align:center;font-size:14px;color:#000">O</div>
<div style="left:121px;top:516px;width:18px;height:33px;background:#b9b9bd;"></div>
<div class="t" style="left:121.0px;top:525.800px;width:18.0px;text-align:center;font-size:14px;color:#000">O</div>
<div style="left:141px;top:516px;width:38px;height:33px;background:#555555;"></div>
<div style="left:181px;top:516px;width:40px;height:33px;background:#555555;"></div>
<div style="left:223px;top:516px;width:43px;height:33px;background:#555555;"></div>
<div style="left:268px;top:516px;width:18px;height:33px;background:#555555;"></div>
<div style="left:288px;top:516px;width:18px;height:33px;background:#555555;"></div>
<div style="left:308px;top:516px;width:47px;height:33px;background:#555555;"></div>
<div style="left:357px;top:516px;width:18px;height:33px;background:#555555;"></div>
<div style="left:377px;top:516px;width:18px;height:33px;background:#555555;"></div>
<div style="left:397px;top:516px;width:18px;height:33px;background:#555555;"></div>
<div style="left:417px;top:516px;width:18px;height:33px;background:#555555;"></div>
<div style="left:437px;top:516px;width:29px;height:33px;background:#555555;"></div>
<div style="left:468px;top:516px;width:18px;height:33px;background:#555555;"></div>
<div style="left:488px;top:516px;width:18px;height:33px;background:#555555;"></div>
<div style="left:508px;top:516px;width:48px;height:33px;background:#555555;"></div>
<div style="left:558px;top:516px;width:18px;height:33px;background:#555555;"></div>
<div style="left:578px;top:516px;width:18px;height:33px;background:#555555;"></div>
<div style="left:598px;top:516px;width:48px;height:33px;background:#555555;"></div>
<div style="left:648px;top:516px;width:18px;height:33px;background:#555555;"></div>
<div style="left:668px;top:516px;width:18px;height:33px;background:#555555;"></div>
<div style="left:688px;top:516px;width:48px;height:33px;background:#555555;"></div>
<div style="left:738px;top:516px;width:18px;height:33px;background:#b9b9bd;"></div>
<div class="t" style="left:738.0px;top:525.800px;width:18.0px;text-align:center;font-size:14px;color:#000">T</div>
<div style="left:758px;top:516px;width:48px;height:33px;background:#555555;"></div>
<div style="left:808px;top:516px;width:18px;height:33px;background:#b9b9bd;"></div>
<div class="t" style="left:808.0px;top:525.800px;width:18.0px;text-align:center;font-size:14px;color:#000">T</div>
<div style="left:828px;top:516px;width:29px;height:33px;background:#c2416d;"></div>
<div style="left:859px;top:516px;width:48px;height:33px;background:#6f6fe0;"></div>
<div style="left:909px;top:516px;width:46px;height:33px;background:#2ea4b8;"></div>
<div style="left:957px;top:516px;width:29px;height:33px;background:#555555;"></div>
<div style="left:988px;top:516px;width:18px;height:33px;background:#b9b9bd;"></div>
<div class="t" style="left:988.0px;top:525.800px;width:18.0px;text-align:center;font-size:14px;color:#000">T</div>
<div style="left:1008px;top:516px;width:44.5px;height:33px;background:#555555;"></div>
<div style="left:1054.5px;top:516px;width:26.5px;height:33px;background:#555555;"></div>
<div style="left:328px;top:32px;width:3px;height:369px;background:#ff0000;"></div>
<svg style="left:0;top:0" width="1095" height="558" viewBox="0 0 1095 558"><path d="M843.5 95.0L756.0 95.0" stroke="#fff" stroke-width="3.4"/><polygon points="735.0,95.0 758.0,87.5 758.0,102.5" fill="#fff"/><path d="M893.5 127.5L853.7 209.1" stroke="#fff" stroke-width="3.4"/><polygon points="844.5,228.0 847.8,204.0 861.3,210.6" fill="#fff"/><path d="M930.0 127.5L949.7 275.2" stroke="#fff" stroke-width="3.4"/><polygon points="952.5,296.0 942.0,274.2 956.9,272.2" fill="#fff"/></svg>
<div class="ann" style="left:7.9px;top:139.6px;width:28.800px;height:28.800px"><span style="left:-0.5px">A</span></div>
<div class="ann" style="left:294.8px;top:306.8px;width:28.800px;height:28.800px"><span style="left:0.1px">B</span></div>
<div class="ann" style="left:892.9px;top:77.6px;width:28.800px;height:28.800px"><span style="left:1.6px">C</span></div>
<div class="ann" style="left:505.8px;top:406.8px;width:28.800px;height:28.800px"><span style="left:0px">D</span></div>
<div class="ann" style="left:892.7px;top:460.7px;width:28.800px;height:28.800px"><span style="left:-0.1px">E</span></div>
<div class="ann" style="left:520.6px;top:516.0px;width:28.800px;height:28.800px"><span style="left:0.9px">F</span></div>
</div></body></html>
